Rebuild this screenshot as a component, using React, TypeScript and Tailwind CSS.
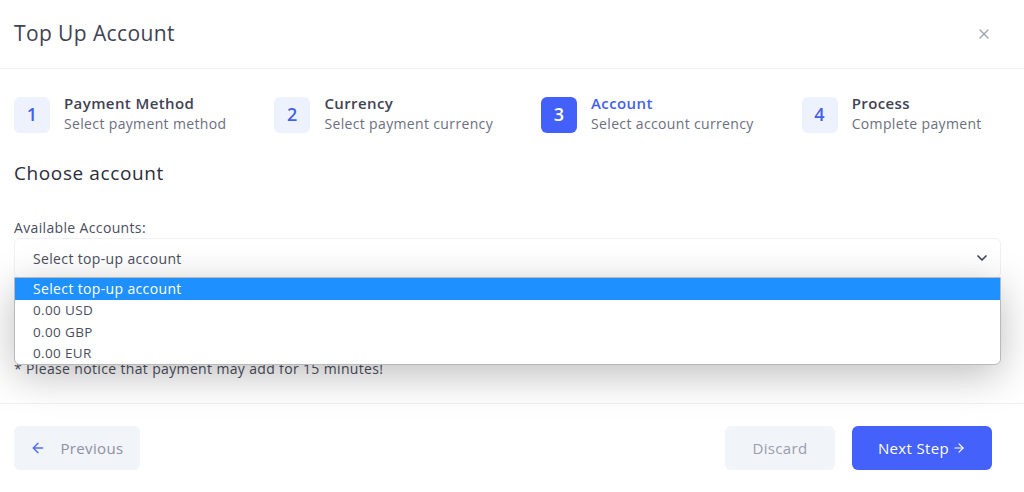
import React from 'react';
import { X, ChevronDown, ArrowLeft, ArrowRight } from 'lucide-react';

const steps = [
  { n: 1, title: 'Payment Method', sub: 'Select payment method' },
  { n: 2, title: 'Currency', sub: 'Select payment currency' },
  { n: 3, title: 'Account', sub: 'Select account currency', active: true },
  { n: 4, title: 'Process', sub: 'Complete payment' },
];

const options = ['Select top-up account', '0.00 USD', '0.00 GBP', '0.00 EUR'];

export default function App() {
  return (
    <div
      className="w-[1024px] h-[492px] bg-white text-[#3f4254] flex flex-col overflow-hidden tracking-[0.35px]"
      style={{ fontFamily: '"Open Sans", "Noto Sans", sans-serif' }}
    >
      <div className="h-[69px] px-[14px] flex items-center justify-between border-b border-[#eff2f5] shrink-0">
        <h1 className="text-[21px] font-medium tracking-[0.4px] text-[#3f4254]">Top Up Account</h1>
        <X className="w-4 h-4 text-[#a1a5b7] mr-[18px]" strokeWidth={2} />
      </div>

      <div className="px-[14px] pt-[25px] flex-1">
        <div className="flex gap-12">
          {steps.map((s) => (
            <div key={s.n} className="flex items-center gap-[14px]">
              <div
                className={
                  s.active
                    ? 'w-9 h-9 rounded-md bg-[#4361fa] text-white flex items-center justify-center text-[18px] font-semibold'
                    : 'w-9 h-9 rounded-md bg-[#eef2ff] text-[#4361ee] flex items-center justify-center text-[18px] font-semibold'
                }
              >
                {s.n}
              </div>
              <div className="flex flex-col">
                <span
                  className={
                    s.active
                      ? 'text-[15px] font-semibold text-[#4361ee] leading-[19px] tracking-[0.4px]'
                      : 'text-[15px] font-semibold text-[#3f4254] leading-[19px] tracking-[0.4px]'
                  }
                >
                  {s.title}
                </span>
                <span className="text-[14px] text-[#6c6f80] leading-[22px]">{s.sub}</span>
              </div>
            </div>
          ))}
        </div>

        <h2 className="mt-[26px] text-[19px] font-medium leading-[24px] tracking-[0.6px] text-[#2b2d3a]">Choose account</h2>

        <div className="mt-[34px] text-[14px] leading-[18px] text-[#4b4e5e]">Available Accounts:</div>

        <div className="relative mt-[1px] mr-[9px]">
          <div className="h-[40px] border border-[#eff2f5] rounded-md flex items-center justify-between pl-[18px] pr-[10px] text-[14px] text-[#4b4e5e]">
            <span>Select top-up account</span>
            <ChevronDown className="w-4 h-4 text-[#3f4254]" strokeWidth={2.5} />
          </div>

          <div className="absolute left-0 right-0 top-[39px] z-10 bg-white border border-[#b9b9b9] rounded-b-md shadow-[0_10px_40px_rgba(0,0,0,0.26)] overflow-hidden">
            {options.map((o, i) => (
              <div
                key={o}
                className={
                  i === 0
                    ? 'h-[21.5px] flex items-center pl-[18px] text-[14px] bg-[#1e90ff] text-white'
                    : 'h-[21.5px] flex items-center pl-[18px] text-[13.5px] text-[#4b4e5e]'
                }
              >
                {o}
              </div>
            ))}
          </div>
        </div>

        <p className="mt-[82px] text-[14px] leading-[18px] text-[#4b4e5e]">* Please notice that payment may add for 15 minutes!</p>
      </div>

      <div className="h-[89px] border-t border-[#eff2f5] px-[14px] flex items-center justify-between shrink-0">
        <button className="h-[44px] w-[126px] rounded-md bg-[#f1f4f8] text-[#8e8fa5] text-[15px] font-medium flex items-center justify-center gap-[14px]">
          <ArrowLeft className="w-4 h-4 text-[#4f6bf0]" strokeWidth={2} />
          Previous
        </button>
        <div className="flex gap-[17px] mr-[18px]">
          <button className="h-[44px] w-[110px] rounded-md bg-[#f1f4f8] text-[#9b9caf] text-[15px] font-medium">Discard</button>
          <button className="h-[44px] w-[140px] rounded-md bg-[#4461fb] text-white text-[15px] font-medium flex items-center justify-center gap-[3px]">
            Next Step
            <ArrowRight className="w-[14px] h-[14px]" strokeWidth={2} />
          </button>
        </div>
      </div>
    </div>
  );
}
